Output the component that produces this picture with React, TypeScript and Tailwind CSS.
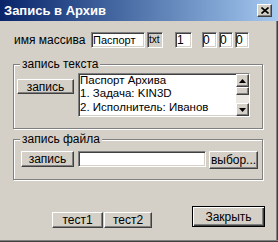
import React from "react";

const raised =
  "bg-[#d4d0c8] border border-t-white border-l-white border-r-[#404040] border-b-[#404040] shadow-[inset_-1px_-1px_0_#808080]";
const sunken =
  "border border-t-[#808080] border-l-[#808080] border-r-white border-b-white shadow-[inset_1px_1px_0_#404040,inset_-1px_-1px_0_#d4d0c8]";
const group =
  "relative ml-[13px] w-[250px] border border-[#808080] shadow-[inset_1px_1px_0_#fff,1px_1px_0_#fff]";

const Arrow = ({ down }: { down?: boolean }) => (
  <svg width="7" height="4" viewBox="0 0 7 4">
    <path d={down ? "M0 0h7L3.5 4z" : "M0 4h7L3.5 0z"} fill="#000" />
  </svg>
);

const Button = ({ label, className }: { label: string; className: string }) => (
  <div className={`${raised} ${className} flex items-center justify-center`}>{label}</div>
);

const Field = ({ value, className }: { value: string; className: string }) => (
  <div className={`${sunken} ${className} flex items-center`}>{value}</div>
);

const App = () => {
  return (
    <div className="w-[278px] h-[242px] overflow-hidden bg-[#d4d0c8] font-['Liberation_Sans',Arial,sans-serif] text-[12px] leading-[14px] text-black shadow-[inset_0_-1px_0_#404040,inset_0_-2px_0_#808080,inset_-1px_0_0_#404040,inset_-2px_0_0_#808080]">
      <div className="h-[21px] flex items-center justify-between pl-[4px] pr-[6px] bg-linear-to-r from-[#0a246a] to-[#a6caf0]">
        <span className="text-white font-bold text-[13px] leading-none">Запись в Архив</span>
        <div className={`${raised} w-[15px] h-[13px] flex items-center justify-center`}>
          <svg width="8" height="7" viewBox="0 0 8 7">
            <path d="M0.5 0.5l7 6M7.5 0.5l-7 6" stroke="#000" strokeWidth="1.6" />
          </svg>
        </div>
      </div>

      {/* имя массива */}
      <div className="mt-[11px] h-[16px] flex items-center">
        <span className="ml-[14px] w-[77px]">имя массива</span>
        <Field value="Паспорт" className="w-[54px] h-[16px] bg-white pl-[1px] text-[11px]" />
        <Field value="txt" className="ml-[2px] w-[16px] h-[16px] bg-[#d4d0c8] pl-[1px] text-[10px]" />
        <Field value="1" className="ml-[12px] w-[17px] h-[16px] bg-white pl-[1px]" />
        <Field value="0" className="ml-[10px] w-[15px] h-[16px] bg-white pl-[0px]" />
        <Field value="0" className="ml-[2px] w-[14px] h-[16px] bg-white pl-[0px]" />
        <Field value="0" className="ml-[2px] w-[14px] h-[16px] bg-white pl-[0px]" />
      </div>

      {/* запись текста */}
      <div className={`${group} mt-[16px] h-[65px]`}>
        <span className="absolute -top-[7px] left-[6px] px-[2px] bg-[#d4d0c8] leading-[12px]">запись текста</span>
        <div className="flex items-start">
          <Button label="запись" className="ml-[3px] mt-[14px] w-[57px] h-[15px]" />
          <div className={`${sunken} ml-[4px] mt-[8px] w-[172px] h-[44px] bg-white flex`}>
            <div className="flex-1 pl-[1px] text-[11.5px] leading-[13.25px] whitespace-nowrap overflow-hidden">
              <div>Паспорт Архива</div>
              <div>1. Задача: KIN3D</div>
              <div>2. Исполнитель: Иванов</div>
            </div>
            <div className="w-[13px] flex flex-col bg-[#ece9e4]">
              <div className={`${raised} h-[13px] flex items-center justify-center`}>
                <Arrow />
              </div>
              <div className={`${raised} h-[8px]`} />
              <div className="flex-1" />
              <div className={`${raised} h-[13px] flex items-center justify-center`}>
                <Arrow down />
              </div>
            </div>
          </div>
        </div>
      </div>

      {/* запись файла */}
      <div className={`${group} mt-[10px] h-[41px]`}>
        <span className="absolute -top-[7px] left-[6px] px-[2px] bg-[#d4d0c8] leading-[12px]">запись файла</span>
        <div className="flex items-start">
          <Button label="запись" className="ml-[7px] mt-[11px] w-[53px] h-[16px]" />
          <Field value="" className="ml-[4px] mt-[11px] w-[128px] h-[16px] bg-white" />
          <Button label="выбор..." className="ml-[3px] mt-[11px] w-[49px] h-[18px]" />
        </div>
      </div>

      {/* bottom buttons */}
      <div className="mt-[26px] flex items-start">
        <Button label="тест1" className="ml-[52px] mt-[6px] w-[51px] h-[16px]" />
        <Button label="тест2" className="ml-[1px] mt-[6px] w-[48px] h-[16px]" />
        <div className="ml-[40px] w-[73px] h-[21px] border border-black bg-[#d4d0c8] shadow-[inset_1px_1px_0_#fff,inset_-1px_-1px_0_#404040,inset_-2px_-2px_0_#808080] flex items-center justify-center">
          Закрыть
        </div>
      </div>
    </div>
  );
};

export default App;
